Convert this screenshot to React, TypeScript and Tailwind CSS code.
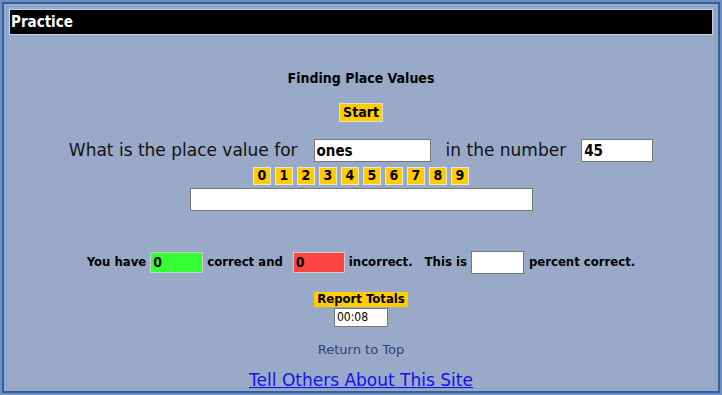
import React, { useState } from 'react';

const digits = ['0', '1', '2', '3', '4', '5', '6', '7', '8', '9'];

const App: React.FC = () => {
  const [answer, setAnswer] = useState('');

  return (
    <div className="w-[722px] h-[395px] bg-[#6f8fc4] p-[2px] font-['DejaVu_Sans',sans-serif]">
      <div className="h-full border-2 border-[#34609a] bg-[#99aac8] p-[2px]">
        <div className="h-full border border-[#7f9ed3] px-[2px] pt-[2px]">
          {/* title bar */}
          <div className="h-[26px] bg-black border border-[#c9d2e2] px-[1px] flex items-center">
            <span className="text-white font-bold text-[15px] font-['DejaVu_Sans_Condensed','DejaVu_Sans',sans-serif]">
              Practice
            </span>
          </div>

          <div className="flex flex-col items-center text-black">
            <div className="mt-[35px] font-bold text-[14px] leading-[16px] font-['DejaVu_Sans_Condensed','DejaVu_Sans',sans-serif]">
              Finding Place Values
            </div>

            <button className="mt-[17px] h-[19px] px-[3px] bg-[#ffcc00] border border-[#e0e0d0] font-bold text-[14px] leading-[15px] font-['DejaVu_Sans_Condensed','DejaVu_Sans',sans-serif]">
              Start
            </button>

            <div className="mt-[16px] flex items-center text-[17px] text-[#111]">
              <span>What is the place value for</span>
              <input
                readOnly
                value="ones"
                className="ml-[16px] w-[117px] h-[23px] bg-white border border-[#777] px-[2px] font-bold text-[15px] text-black outline-none font-['DejaVu_Sans_Condensed','DejaVu_Sans',sans-serif]"
              />
              <span className="ml-[15px]">in the number</span>
              <input
                readOnly
                value="45"
                className="ml-[15px] w-[72px] h-[23px] bg-white border border-[#777] px-[2px] font-bold text-[15px] text-black outline-none font-['DejaVu_Sans_Condensed','DejaVu_Sans',sans-serif]"
              />
            </div>

            <div className="mt-[3px] flex gap-[4px]">
              {digits.map((d) => (
                <button
                  key={d}
                  onClick={() => setAnswer(answer + d)}
                  className="w-[18px] h-[18px] bg-[#ffcc00] border border-[#e6e6dc] font-bold text-[14px] leading-[15px] flex items-center justify-center font-['DejaVu_Sans_Condensed','DejaVu_Sans',sans-serif]"
                >
                  {d}
                </button>
              ))}
            </div>

            <input
              value={answer}
              onChange={(e) => setAnswer(e.target.value)}
              className="mt-[3px] w-[343px] h-[23px] bg-white border border-[#777] outline-none"
            />

            <div className="mt-[40px] flex items-center font-bold text-[13px] font-['DejaVu_Sans_Condensed','DejaVu_Sans',sans-serif]">
              <span>You have</span>
              <input
                readOnly
                value="0"
                className="ml-[4px] w-[53px] h-[21px] bg-[#33ff33] border border-[#ccc] px-[2px] font-bold text-[14px] outline-none"
              />
              <span className="ml-[4px]">correct and</span>
              <input
                readOnly
                value="0"
                className="ml-[10px] w-[52px] h-[21px] bg-[#ff4444] border border-[#ccc] px-[2px] font-bold text-[14px] outline-none"
              />
              <span className="ml-[4px]">incorrect.</span>
              <span className="ml-[12px]">This is</span>
              <input
                readOnly
                value=""
                className="ml-[4px] w-[53px] h-[23px] bg-white border border-[#777] outline-none"
              />
              <span className="ml-[5px]">percent correct.</span>
            </div>

            <button className="mt-[18px] h-[15px] px-[3px] bg-[#ffcc00] font-bold text-[13px] leading-[14px] font-['DejaVu_Sans_Condensed','DejaVu_Sans',sans-serif]">
              Report Totals
            </button>
            <input
              readOnly
              value="00:08"
              className="mt-[1px] w-[54px] h-[19px] bg-white border border-[#777] px-[2px] text-[12px] text-black outline-none font-['DejaVu_Sans_Condensed','DejaVu_Sans',sans-serif]"
            />

            <a href="#" className="mt-[14px] text-[13px] leading-[18px] text-[#2f3f7a]">
              Return to Top
            </a>

            <a href="#" className="mt-[10px] text-[17px] leading-[22px] text-[#1111ee] underline">
              Tell Others About This Site
            </a>
          </div>
        </div>
      </div>
    </div>
  );
};

export default App;
